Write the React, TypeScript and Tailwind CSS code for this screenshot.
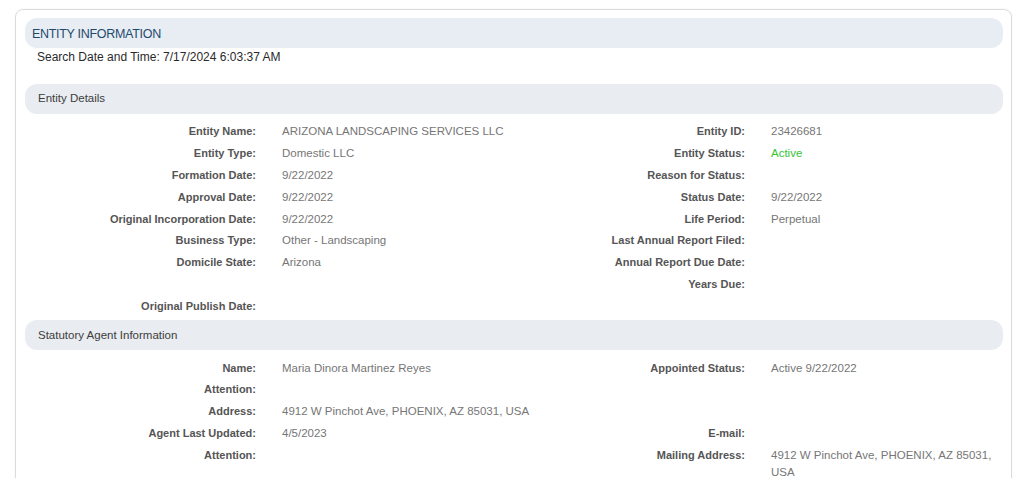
type Row = [string, string?, string?];

const details: { left: Row[]; right: Row[] } = {
  left: [
    ["Entity Name:", "ARIZONA LANDSCAPING SERVICES LLC"],
    ["Entity Type:", "Domestic LLC"],
    ["Formation Date:", "9/22/2022"],
    ["Approval Date:", "9/22/2022"],
    ["Original Incorporation Date:", "9/22/2022"],
    ["Business Type:", "Other - Landscaping"],
    ["Domicile State:", "Arizona"],
    ["", ""],
    ["Original Publish Date:", ""],
  ],
  right: [
    ["Entity ID:", "23426681"],
    ["Entity Status:", "Active", "green"],
    ["Reason for Status:", ""],
    ["Status Date:", "9/22/2022"],
    ["Life Period:", "Perpetual"],
    ["Last Annual Report Filed:", ""],
    ["Annual Report Due Date:", ""],
    ["Years Due:", ""],
  ],
};

const agent: { left: Row[]; right: Row[] } = {
  left: [
    ["Name:", "Maria Dinora Martinez Reyes"],
    ["Attention:", ""],
    ["Address:", "4912 W Pinchot Ave, PHOENIX, AZ 85031, USA"],
    ["Agent Last Updated:", "4/5/2023"],
    ["Attention:", ""],
  ],
  right: [
    ["Appointed Status:", "Active 9/22/2022"],
    ["", ""],
    ["", ""],
    ["E-mail:", ""],
    ["Mailing Address:", "4912 W Pinchot Ave, PHOENIX, AZ 85031, USA"],
  ],
};

function Fields({ rows, nowrap }: { rows: Row[]; nowrap?: boolean }) {
  return (
    <div className="grid grid-cols-[231px_1fr] gap-x-[26px] content-start">
      {rows.map(([label, value, tone], i) => (
        <div key={i} className="contents">
          <div className="text-right text-[11px] font-bold text-[#555555] leading-[17px] py-[2.4px] min-h-[21.8px]">
            {label}
          </div>
          <div
            className={
              "text-[11.5px] leading-[17px] py-[2.4px] " +
              (nowrap ? "whitespace-nowrap " : "") +
              (tone === "green" ? "text-[#35c435]" : "text-[#767676]")
            }
          >
            {value}
          </div>
        </div>
      ))}
    </div>
  );
}

function SectionBar({ title }: { title: string }) {
  return (
    <div className="h-[30px] rounded-[12px] bg-[#e9ecf1] flex items-center pl-[13px] text-[11.5px] text-[#3d3d3d]">
      {title}
    </div>
  );
}

export default function App() {
  return (
    <div className="h-[478px] overflow-hidden bg-white pt-[9px] pl-[15px] pr-[12px] font-['Liberation_Sans',Arial,sans-serif]">
      <div className="rounded-[8px] border border-[#dcdcdc] pt-[8px] pl-[9px] pr-[8px] pb-6 shadow-[0_0_3px_rgba(0,0,0,0.05)]">
        <div className="h-[30px] rounded-[12px] bg-[#e8edf4] flex items-center pl-[7px] pt-[2px] text-[12.5px] text-[#1e4a6e] tracking-[-0.3px]">
          ENTITY INFORMATION
        </div>
        <div className="pl-[12px] pt-[1px] h-[36px] text-[12px] text-[#2a2a2a] leading-[17px]">
          Search Date and Time: 7/17/2024 6:03:37 AM
        </div>

        <SectionBar title="Entity Details" />
        <div className="grid grid-cols-2 pt-[7px] pb-[3px]">
          <Fields rows={details.left} nowrap />
          <Fields rows={details.right} />
        </div>

        <SectionBar title="Statutory Agent Information" />
        <div className="grid grid-cols-2 pt-[7px]">
          <Fields rows={agent.left} nowrap />
          <Fields rows={agent.right} />
        </div>
      </div>
    </div>
  );
}
